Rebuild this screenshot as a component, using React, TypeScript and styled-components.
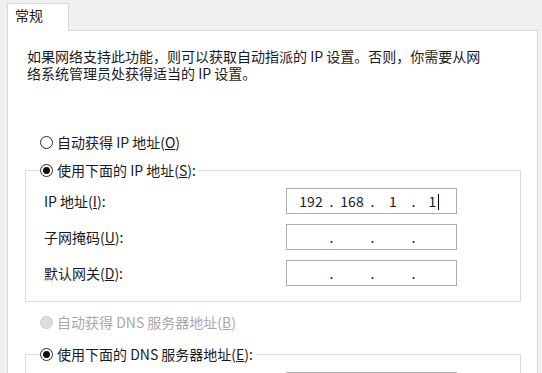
import React from 'react';
import styled, { createGlobalStyle } from 'styled-components';

const Global = createGlobalStyle`
  html, body { margin: 0; padding: 0; background: #f0f0f0; }
  body {
    font-family: "Noto Sans CJK SC", "Microsoft YaHei", sans-serif;
    font-size: 14px;
    color: #1a1a1a;
  }
`;

const Window = styled.div`
  width: 542px;
  height: 373px;
  overflow: hidden;
  box-sizing: border-box;
  padding: 3px 4px 0 7px;
  display: flex;
  flex-direction: column;
`;

const TabStrip = styled.div`
  display: flex;
  height: 27px;
  position: relative;
  z-index: 1;
`;

const Tab = styled.div`
  box-sizing: border-box;
  width: 62px;
  height: 28px;
  background: #fff;
  border: 1px solid #d9d9d9;
  border-bottom: none;
  padding-left: 7px;
  line-height: 22px;
`;

const Panel = styled.div`
  flex: 1;
  min-height: 0;
  overflow: hidden;
  background: #fff;
  border: 1px solid #d9d9d9;
  border-bottom: none;
  padding: 0 16px 0 17px;
`;

const Intro = styled.p`
  margin: 17px 0 0 2px;
  line-height: 17px;
`;

const RadioRow = styled.label<{ $disabled?: boolean; $gap?: number }>`
  display: flex;
  align-items: center;
  gap: 4px;
  height: 20px;
  line-height: 20px;
  margin-top: ${(p) => p.$gap ?? 0}px;
  padding-left: 15px;
  color: ${(p) => (p.$disabled ? '#a8a8a8' : '#1a1a1a')};
  white-space: nowrap;
`;

const RadioDot = styled.span<{ $checked?: boolean; $disabled?: boolean }>`
  box-sizing: border-box;
  width: 13px;
  height: 13px;
  border-radius: 50%;
  border: 1px solid ${(p) => (p.$disabled ? '#cdcdcd' : '#2a2a2a')};
  background: ${(p) => (p.$disabled ? '#dcdcdc' : '#fff')};
  display: inline-flex;
  align-items: center;
  justify-content: center;
  flex: none;
  &::after {
    content: '';
    display: ${(p) => (p.$checked ? 'block' : 'none')};
    width: 7px;
    height: 7px;
    border-radius: 50%;
    background: #111;
  }
`;

const Group = styled.fieldset<{ $gap: number }>`
  margin: ${(p) => p.$gap}px 0 0;
  padding: 0;
  min-width: 0;
  border: 1px solid #dcdcdc;
`;

const Legend = styled.legend`
  margin-left: 14px;
  padding: 0 2px 0 0;
  height: 20px;
  line-height: 20px;
  display: flex;
  align-items: center;
  gap: 4px;
  white-space: nowrap;
`;

const GroupBody = styled.div`
  display: grid;
  grid-template-columns: 242px 171px;
  row-gap: 10px;
  align-items: center;
  padding: 8px 63px 15px 18px;
`;

const FieldLabel = styled.span`
  line-height: 20px;
  white-space: nowrap;
`;

const IpBox = styled.div`
  box-sizing: border-box;
  height: 26px;
  border: 1px solid #adadad;
  display: flex;
  align-items: center;
  padding-left: 5px;
  background: #fff;
`;

const Segment = styled.span`
  width: 38px;
  text-align: center;
  line-height: 20px;
  white-space: nowrap;
`;

const Dot = styled.span`
  width: 3px;
  display: flex;
  justify-content: center;
  line-height: 20px;
`;

const Caret = styled.span`
  display: inline-block;
  width: 1px;
  height: 16px;
  background: #000;
  vertical-align: -3px;
  margin-left: 2px;
`;

function IpField({ parts, caret }: { parts: string[]; caret?: boolean }) {
  return (
    <IpBox>
      {parts.map((p, i) => (
        <React.Fragment key={i}>
          {i > 0 && <Dot>.</Dot>}
          <Segment>
            {p}
            {caret && i === parts.length - 1 && <Caret />}
          </Segment>
        </React.Fragment>
      ))}
    </IpBox>
  );
}

const empty = ['', '', '', ''];

export default function App() {
  return (
    <>
      <Global />
      <Window>
        <TabStrip>
          <Tab>常规</Tab>
        </TabStrip>
        <Panel>
          <Intro>
            如果网络支持此功能，则可以获取自动指派的 IP 设置。否则，你需要从网
            <br />
            络系统管理员处获得适当的 IP 设置。
          </Intro>

          <RadioRow $gap={50}>
            <RadioDot />
            <span>
              自动获得 IP 地址(<u>O</u>)
            </span>
          </RadioRow>

          <Group $gap={8}>
            <Legend>
              <RadioDot $checked />
              <span>
                使用下面的 IP 地址(<u>S</u>):
              </span>
            </Legend>
            <GroupBody>
              <FieldLabel>
                IP 地址(<u>I</u>):
              </FieldLabel>
              <IpField parts={['192', '168', '1', '1']} caret />
              <FieldLabel>
                子网掩码(<u>U</u>):
              </FieldLabel>
              <IpField parts={empty} />
              <FieldLabel>
                默认网关(<u>D</u>):
              </FieldLabel>
              <IpField parts={empty} />
            </GroupBody>
          </Group>

          <RadioRow $gap={10} $disabled>
            <RadioDot $disabled />
            <span>
              自动获得 DNS 服务器地址(<u>B</u>)
            </span>
          </RadioRow>

          <Group $gap={12}>
            <Legend>
              <RadioDot $checked />
              <span>
                使用下面的 DNS 服务器地址(<u>E</u>):
              </span>
            </Legend>
            <GroupBody>
              <FieldLabel>
                首选 DNS 服务器(<u>P</u>):
              </FieldLabel>
              <IpField parts={empty} />
              <FieldLabel>
                备用 DNS 服务器(<u>A</u>):
              </FieldLabel>
              <IpField parts={empty} />
            </GroupBody>
          </Group>
        </Panel>
      </Window>
    </>
  );
}
